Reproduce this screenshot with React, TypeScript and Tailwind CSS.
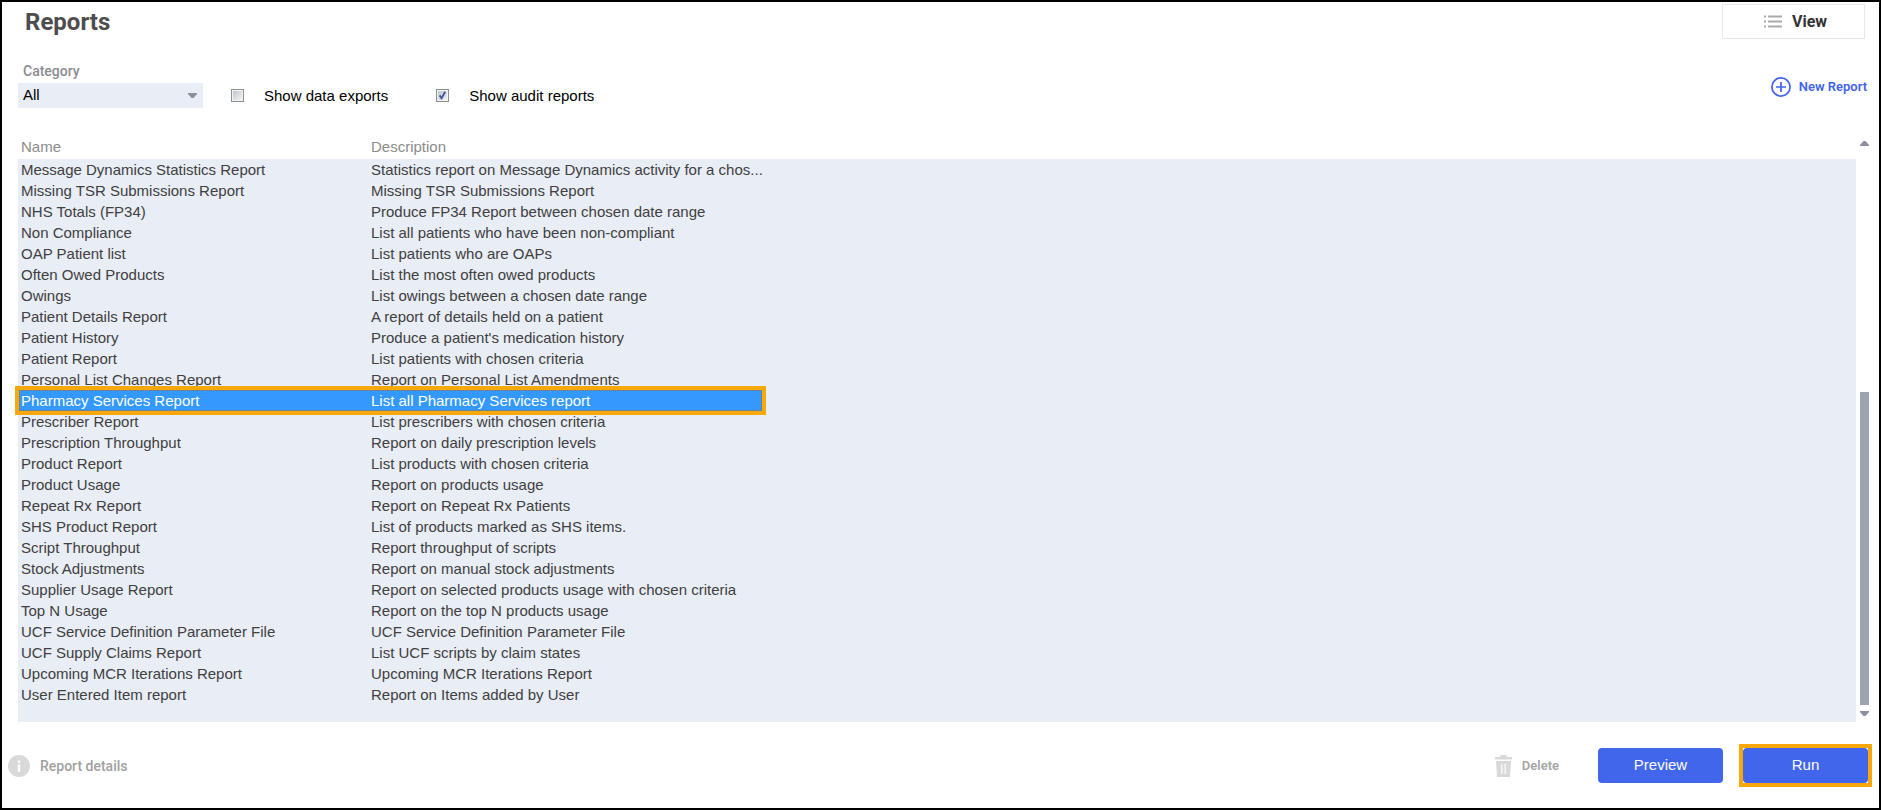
import { useState } from "react";
import clsx from "clsx";

const REPORTS = [
  { name: "Message Dynamics Statistics Report", description: "Statistics report on Message Dynamics activity for a chos..." },
  { name: "Missing TSR Submissions Report", description: "Missing TSR Submissions Report" },
  { name: "NHS Totals (FP34)", description: "Produce FP34 Report between chosen date range" },
  { name: "Non Compliance", description: "List all patients who have been non-compliant" },
  { name: "OAP Patient list", description: "List patients who are OAPs" },
  { name: "Often Owed Products", description: "List the most often owed products" },
  { name: "Owings", description: "List owings between a chosen date range" },
  { name: "Patient Details Report", description: "A report of details held on a patient" },
  { name: "Patient History", description: "Produce a patient's medication history" },
  { name: "Patient Report", description: "List patients with chosen criteria" },
  { name: "Personal List Changes Report", description: "Report on Personal List Amendments" },
  { name: "Pharmacy Services Report", description: "List all Pharmacy Services report" },
  { name: "Prescriber Report", description: "List prescribers with chosen criteria" },
  { name: "Prescription Throughput", description: "Report on daily prescription levels" },
  { name: "Product Report", description: "List products with chosen criteria" },
  { name: "Product Usage", description: "Report on products usage" },
  { name: "Repeat Rx Report", description: "Report on Repeat Rx Patients" },
  { name: "SHS Product Report", description: "List of products marked as SHS items." },
  { name: "Script Throughput", description: "Report throughput of scripts" },
  { name: "Stock Adjustments", description: "Report on manual stock adjustments" },
  { name: "Supplier Usage Report", description: "Report on selected products usage with chosen criteria" },
  { name: "Top N Usage", description: "Report on the top N products usage" },
  { name: "UCF Service Definition Parameter File", description: "UCF Service Definition Parameter File" },
  { name: "UCF Supply Claims Report", description: "List UCF scripts by claim states" },
  { name: "Upcoming MCR Iterations Report", description: "Upcoming MCR Iterations Report" },
  { name: "User Entered Item report", description: "Report on Items added by User" },
];

function ListIcon() {
  return (
    <svg width="18" height="14" viewBox="0 0 18 14" aria-hidden="true">
      {[0, 5, 10].map(y => (
        <g key={y}>
          <path d={`M0 ${y}h2v3H0zM4 ${y}h14v3H4z`} fill="#d6d6d6" />
          <path d={`M0 ${y + 1}h2v1H0zM4 ${y + 1}h14v1H4z`} fill="#a8a8a8" />
        </g>
      ))}
    </svg>
  );
}

function PlusCircleIcon() {
  return (
    <svg width="20" height="20" viewBox="0 0 20 20" fill="none" stroke="#4263eb" aria-hidden="true">
      <circle cx="10" cy="10" r="9.1" strokeWidth="1.7" />
      <path d="M10 5v10M5 10h10" strokeWidth="1.7" />
    </svg>
  );
}

function InfoIcon() {
  return (
    <svg width="22" height="22" viewBox="0 0 22 22" aria-hidden="true">
      <circle cx="11" cy="11" r="11" fill="#d9d9d9" />
      <path d="M9.8 5.5h2.4v2.2H9.8zM9.8 9.3h2.4v7.4H9.8z" fill="#fff" />
    </svg>
  );
}

function TrashIcon() {
  return (
    <svg width="17" height="22" viewBox="0 0 17 22" aria-hidden="true">
      <path d="M0 2h5l1-2h5l1 2h5v2.4H0zM1 6h15l-1 16H2z" fill="#d9d9d9" />
      <path d="M6.8 9v10M10.2 9v10" stroke="#fff" strokeWidth="1.2" />
    </svg>
  );
}

function ArrowUp() {
  return (
    <svg className="block" width="9" height="5" viewBox="0 0 9 5" aria-hidden="true">
      <path d="M0 5h9V4L5.5 0h-2L0 4z" fill="#8b8f9e" />
    </svg>
  );
}

function ArrowDown() {
  return (
    <svg className="block" width="9" height="5" viewBox="0 0 9 5" aria-hidden="true">
      <path d="M0 0h9v1L5.5 5h-2L0 1z" fill="#8b8f9e" />
    </svg>
  );
}

type CheckProps = {
  id: string;
  label: string;
  checked: boolean;
  onChange: (checked: boolean) => void;
};

function Check({ id, label, checked, onChange }: CheckProps) {
  return (
    <div className="flex h-[25px] items-center gap-5">
      <div className="relative size-[13px]">
        <input
          id={id}
          type="checkbox"
          checked={checked}
          onChange={e => onChange(e.target.checked)}
          className="block size-[13px] appearance-none border border-[#8e8f8f] bg-linear-to-br from-[#b9bfca] to-[#f8f8f8] ring-1 ring-inset ring-[#f4f4f4]"
        />
        {checked && (
          <svg className="pointer-events-none absolute inset-0" width="13" height="13" viewBox="0 0 13 13" fill="none">
            <path d="M3.6 6.4l2 2.8 3.6-6.4" stroke="#3f5a9d" strokeWidth="1.9" />
          </svg>
        )}
      </div>
      <label htmlFor={id} className="text-[15px] leading-5 text-black">{label}</label>
    </div>
  );
}

export default function App() {
  const [category, setCategory] = useState("All");
  const [dataExports, setDataExports] = useState(false);
  const [auditReports, setAuditReports] = useState(true);
  const [selected, setSelected] = useState("Pharmacy Services Report");

  return (
    <main className="flex min-h-screen flex-col border-2 border-black bg-white font-['Liberation_Sans',sans-serif]">
      <header className="flex items-start justify-between pt-0.5 pr-3.5 pl-[23px]">
        <h1 className="pt-1 font-[Roboto,sans-serif] text-2xl leading-7 font-bold text-[#4d4d4d]">Reports</h1>
        <button className="flex h-[35px] w-[143px] items-center justify-center gap-2.5 border border-[#e8e8e8] pl-1 font-[Roboto,sans-serif] text-base font-bold text-[#333]">
          <ListIcon />
          View
        </button>
      </header>

      <div className="flex items-start justify-between pt-[22px] pr-3 pl-4">
        <div className="flex items-end">
          <div className="flex flex-col gap-0.5">
            <label htmlFor="category" className="pl-[5px] font-[Roboto,sans-serif] text-sm leading-5 font-medium text-[#8c8c94]">
              Category
            </label>
            <div className="relative">
              <select
                id="category"
                value={category}
                onChange={e => setCategory(e.target.value)}
                className="block h-[25px] w-[185px] appearance-none bg-[#e9edf6] pl-[5px] text-[15px] text-black"
              >
                <option>All</option>
              </select>
              <div className="pointer-events-none absolute top-2.5 right-1.5">
                <ArrowDown />
              </div>
            </div>
          </div>
          <div className="flex gap-12 pl-7">
            <Check id="data-exports" label="Show data exports" checked={dataExports} onChange={setDataExports} />
            <Check id="audit-reports" label="Show audit reports" checked={auditReports} onChange={setAuditReports} />
          </div>
        </div>
        <button className="mt-4 flex items-center gap-2 font-[Roboto,sans-serif] text-[13px] leading-5 font-semibold text-[#4263eb]">
          <PlusCircleIcon />
          New Report
        </button>
      </div>

      <section className="flex flex-1 pt-[27px] pr-1.5 pl-4">
        {/* column headings sit above the tinted panel */}
        <div className="mt-6 flex-1 bg-[#e9edf6] pb-[17px]">
          <table className="-mt-6 ml-px w-[743px] table-fixed text-left text-[15px] text-[#404040]">
            <colgroup>
              <col className="w-[350px]" />
              <col />
            </colgroup>
            <thead className="bg-white">
              <tr className="h-6 leading-[22px] text-[#8c8c8c]">
                <th className="px-0.5 py-0 font-normal">Name</th>
                <th className="px-0.5 py-0 font-normal">Description</th>
              </tr>
            </thead>
            <tbody>
              {REPORTS.map(report => {
                const active = report.name === selected;
                return (
                  <tr
                    key={report.name}
                    onClick={() => setSelected(report.name)}
                    className={clsx("h-[21px] leading-[21px]", active && "relative bg-[#3399ff] text-white outline-4 outline-[#f9a80b]")}
                  >
                    <td className="px-0.5 py-0 whitespace-nowrap">
                      {report.name}
                      {active && <span className="pointer-events-none absolute inset-0 border border-dotted border-[#a46a3c]" />}
                    </td>
                    <td className="px-0.5 py-0 whitespace-nowrap">{report.description}</td>
                  </tr>
                );
              })}
            </tbody>
          </table>
        </div>

        <div className="flex w-[17px] flex-col items-center py-1.5">
          <button aria-label="Scroll up"><ArrowUp /></button>
          <div className="flex w-[9px] flex-1 flex-col pb-1.5">
            <div className="flex-[246]" />
            <div className="flex-[313] bg-[#9da5ac]" />
          </div>
          <button aria-label="Scroll down"><ArrowDown /></button>
        </div>
      </section>

      <footer className="flex items-center justify-between pt-[22px] pr-[7px] pb-[21px] pl-1.5">
        <button className="flex items-center gap-2.5 font-[Roboto,sans-serif] text-sm font-medium text-[#a0a0a0]">
          <InfoIcon />
          Report details
        </button>
        <div className="flex items-center">
          <button className="mr-[39px] flex items-center gap-2.5 font-[Roboto,sans-serif] text-[13px] font-semibold text-[#a6a6a6]">
            <TrashIcon />
            Delete
          </button>
          <button className="mr-4 h-[35px] w-[125px] rounded bg-[#4166ec] text-[15px] text-white">Preview</button>
          <div className="border-4 border-[#f9a80b]">
            <button className="block h-[35px] w-[125px] rounded bg-[#4166ec] text-[15px] text-white">Run</button>
          </div>
        </div>
      </footer>
    </main>
  );
}
